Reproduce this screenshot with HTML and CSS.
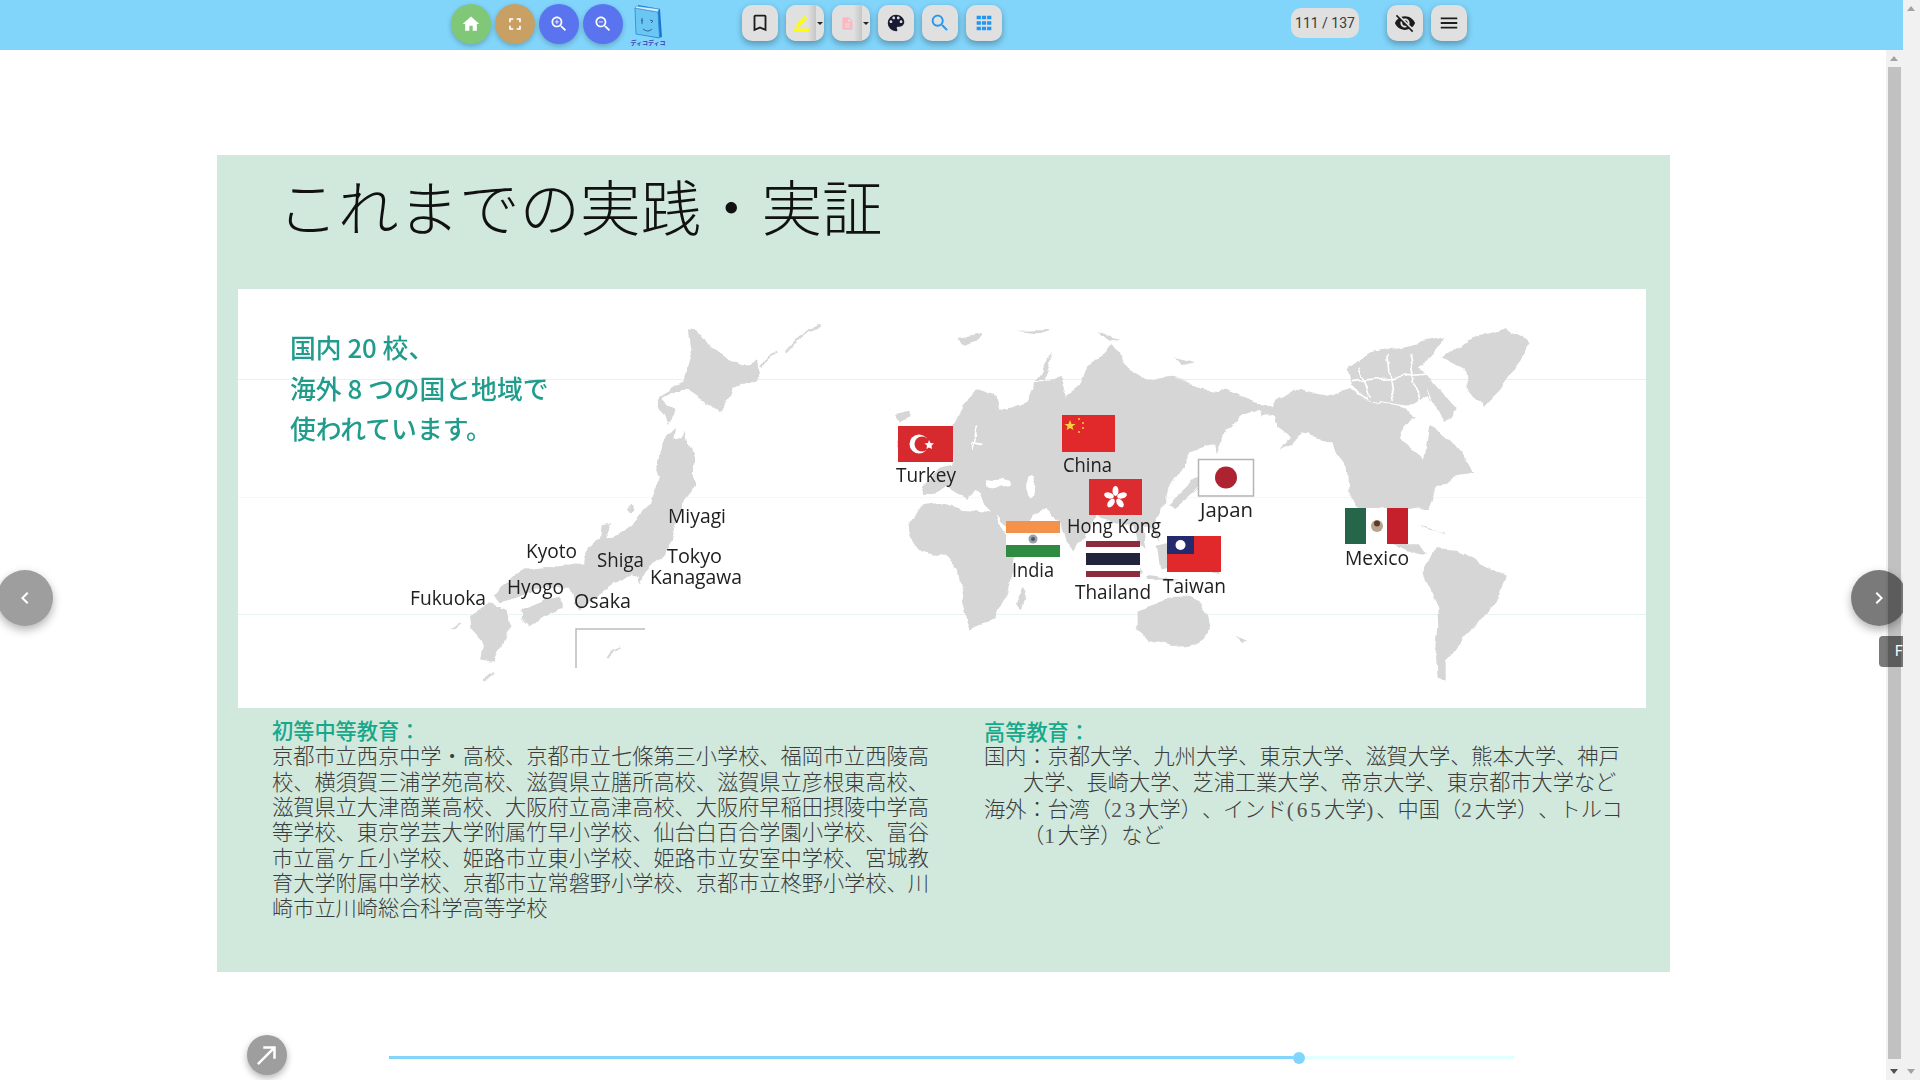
FILE: index.html
```html
<!DOCTYPE html>
<html lang="ja">
<head>
<meta charset="utf-8">
<title>ディコディコ</title>
<link rel="stylesheet" href="styles.css">
</head>
<body>
<div class="app">
  <header class="toolbar">
    <div class="group circles">
      <button class="circle home"><svg viewBox="0 0 24 24"><path d="M10 20v-6h4v6h5v-8h3L12 3 2 12h3v8z"/></svg></button>
      <button class="circle full"><svg viewBox="0 0 24 24"><path d="M7 14H5v5h5v-2H7v-3zm-2-4h2V7h3V5H5v5zm12 7h-3v2h5v-5h-2v3zM14 5v2h3v3h2V5h-5z"/></svg></button>
      <button class="circle zoom"><svg viewBox="0 0 24 24"><path d="M15.5 14h-.79l-.28-.27C15.41 12.59 16 11.11 16 9.5 16 5.91 13.09 3 9.5 3S3 5.91 3 9.5 5.91 16 9.5 16c1.61 0 3.09-.59 4.23-1.57l.27.28v.79l5 4.99L20.49 19l-4.99-5zm-6 0C7.01 14 5 11.99 5 9.5S7.01 5 9.5 5 14 7.01 14 9.5 11.99 14 9.5 14z"/><path d="M12 10h-2v2H9v-2H7V9h2V7h1v2h2v1z"/></svg></button>
      <button class="circle zoom"><svg viewBox="0 0 24 24"><path d="M15.5 14h-.79l-.28-.27C15.41 12.59 16 11.11 16 9.5 16 5.91 13.09 3 9.5 3S3 5.91 3 9.5 5.91 16 9.5 16c1.61 0 3.09-.59 4.23-1.57l.27.28v.79l5 4.99L20.49 19l-4.99-5zm-6 0C7.01 14 5 11.99 5 9.5S7.01 5 9.5 5 14 7.01 14 9.5 11.99 14 9.5 14z"/><path d="M7 9h5v1H7z"/></svg></button>
    </div>
    <div class="logo">
      <svg viewBox="0 0 30 35" class="logo-book">
        <path d="M5 1 27 5 29 33 25 34 3 29z" fill="#1976d2"/>
        <path d="M2 4 25 8 26.500 34 3 30z" fill="#6cc6f4" stroke="#2a86cf" stroke-width=".8"/>
        <path d="M3 2 26 5 25 8 2 4z" fill="#d2f0fc" stroke="#2a86cf" stroke-width=".5"/>
        <path d="M9 14v6M8 16l2 1M17 16l3 1 -2 2M10 25q5 4 9 0" fill="none" stroke="#245c8f" stroke-width=".9"/>
      </svg>
      <span class="logo-text">ディコディコ</span>
    </div>
    <div class="group tools">
      <button class="square"><svg viewBox="0 0 24 24" class="ic-dark"><path d="M17 3H7c-1.100 0-2 .9-2 2v16l7-3 7 3V5c0-1.100-.9-2-2-2zm0 15l-5-2.180L7 18V5h10v13z"/></svg></button>
      <div class="split">
        <div class="split-main"><svg viewBox="0 0 24 24" class="ic-yellow"><path d="M17.750 7 14 3.250l-10 10V17h3.750l10-10zm2.960-2.960c.39-.39.39-1.020 0-1.410L18.370.29a.9959.9959 0 0 0-1.410 0L15 2.250 18.750 6l1.960-1.960z"/><path d="M0 20h24v4H0z"/></svg></div>
        <div class="split-caret"><i class="caret"></i></div>
      </div>
      <div class="split">
        <div class="split-main"><svg viewBox="0 0 24 24" class="ic-pink"><path d="M14 2H6c-1.100 0-1.990.9-1.990 2L4 20c0 1.100.89 2 1.990 2H18c1.100 0 2-.9 2-2V8l-6-6zm2 16H8v-2h8v2zm0-4H8v-2h8v2zm-3-5V3.500L18.500 9H13z"/></svg></div>
        <div class="split-caret"><i class="caret"></i></div>
      </div>
      <button class="square"><svg viewBox="0 0 24 24" class="ic-navy"><path d="M12 3a9 9 0 0 0 0 18c.83 0 1.500-.67 1.500-1.500 0-.39-.15-.74-.39-1.010-.23-.26-.38-.61-.38-.99 0-.83.67-1.500 1.500-1.500H16c2.760 0 5-2.240 5-5 0-4.420-4.030-8-9-8zm-5.500 9c-.83 0-1.500-.67-1.500-1.500S5.670 9 6.500 9 8 9.670 8 10.500 7.330 12 6.500 12zm3-4C8.670 8 8 7.330 8 6.500S8.670 5 9.500 5s1.500.67 1.500 1.500S10.330 8 9.500 8zm5 0c-.83 0-1.500-.67-1.500-1.500S13.670 5 14.500 5s1.500.67 1.500 1.500S15.330 8 14.500 8zm3 4c-.83 0-1.500-.67-1.500-1.500S16.670 9 17.500 9s1.500.67 1.500 1.500-.67 1.500-1.500 1.500z"/></svg></button>
      <button class="square"><svg viewBox="0 0 24 24" class="ic-blue"><path d="M15.500 14h-.79l-.28-.27C15.410 12.590 16 11.110 16 9.500 16 5.910 13.090 3 9.500 3S3 5.910 3 9.500 5.910 16 9.500 16c1.610 0 3.090-.59 4.230-1.570l.27.28v.79l5 4.990L20.490 19l-4.990-5zm-6 0C7.010 14 5 11.990 5 9.500S7.010 5 9.500 5 14 7.010 14 9.500 11.990 14 9.500 14z"/></svg></button>
      <button class="square"><svg viewBox="0 0 24 24" class="ic-blue"><path d="M4 8h4.600V4H4v4zm5.700 0h4.600V4H9.700v4zm5.700-4v4H20V4h-4.600zM4 14h4.600v-4H4v4zm5.700 0h4.600v-4H9.700v4zm5.700 0H20v-4h-4.600v4zM4 20h4.600v-4H4v4zm5.700 0h4.600v-4H9.700v4zm5.700 0H20v-4h-4.600v4z"/></svg></button>
    </div>
    <div class="page-pill">111 / 137</div>
    <div class="group actions">
      <button class="square"><svg viewBox="0 0 24 24" class="ic-dark"><path d="M12 7c2.760 0 5 2.240 5 5 0 .65-.13 1.260-.36 1.830l2.920 2.920c1.510-1.260 2.700-2.890 3.430-4.750-1.730-4.390-6-7.500-11-7.500-1.400 0-2.740.25-3.980.7l2.160 2.160C10.740 7.130 11.350 7 12 7zM2 4.270l2.280 2.280.46.46C3.080 8.300 1.780 10.020 1 12c1.730 4.390 6 7.500 11 7.500 1.550 0 3.030-.3 4.380-.84l.42.42L19.730 22 21 20.730 3.270 3 2 4.270zM7.530 9.800l1.550 1.550c-.05.21-.08.43-.08.65 0 1.660 1.340 3 3 3 .22 0 .44-.03.65-.08l1.550 1.550c-.67.33-1.410.53-2.200.53-2.760 0-5-2.240-5-5 0-.79.2-1.530.53-2.200zm4.310-.78l3.150 3.150.02-.16c0-1.660-1.340-3-3-3l-.17.01z"/></svg></button>
      <button class="square"><svg viewBox="0 0 24 24" class="ic-dark"><path d="M3 18h18v-2H3v2zm0-5h18v-2H3v2zm0-7v2h18V6H3z"/></svg></button>
    </div>
  </header>

  <div class="body-row">
    <main class="viewer">
      <section class="slide">
        <h1 class="slide-title">これまでの実践・実証</h1>
        <div class="map-box">
          <svg class="map" viewBox="238 289 1408 419" xmlns="http://www.w3.org/2000/svg">
            <defs>
              <filter id="rough" filterUnits="userSpaceOnUse" x="238" y="289" width="1408" height="419" color-interpolation-filters="sRGB">
                <feTurbulence type="fractalNoise" baseFrequency=".05" numOctaves="3" seed="7" result="n"/>
                <feDisplacementMap in="SourceGraphic" in2="n" scale="9" xChannelSelector="R" yChannelSelector="G"/>
              </filter>
            </defs>
            <line class="grid-a" x1="238" y1="379.500" x2="1646" y2="379.500"/>
            <line class="grid-b" x1="238" y1="497.500" x2="1646" y2="497.500"/>
            <line class="grid-a" x1="238" y1="614.500" x2="1646" y2="614.500"/>
            <g filter="url(#rough)">
              <!-- Japan -->
              <g class="land" transform="translate(400 310) scale(.33333)">
                <polygon points="870,55 895,60 930,110 985,150 1045,172 1068,145 1075,210 1020,230 1000,240 960,310 905,270 860,240 810,240 785,265 825,305 800,345 780,300 770,270 810,225 855,210 860,170 875,120"/>
                <polygon points="800,375 825,350 820,385 845,385 850,355 858,395 885,450 885,530 855,570 835,625 815,690 785,745 760,760 730,790 720,830 710,800 690,790 640,825 590,860 540,900 520,880 510,830 430,830 360,858 300,880 278,862 290,850 340,800 380,775 440,768 500,770 555,760 570,715 600,685 605,640 630,635 612,682 660,670 710,630 750,580 780,500 768,462 785,410"/>
                <polygon points="365,900 440,870 482,860 482,888 440,915 385,952 362,930"/>
                <polygon points="210,915 270,880 322,900 335,940 302,1010 282,1058 240,1048 250,1000 215,960"/>
                <polygon points="680,600 695,580 700,605 688,612"/>
                <polyline class="thin" points="1160,122 1200,80 1265,45"/>
                <polyline class="thin" points="1080,175 1105,140 1135,125"/>
                <polyline class="thin" points="625,1050 640,1020 658,1008"/>
                <polyline class="thin" points="250,1112 282,1085"/>
                <polyline class="thin" points="155,960 180,940"/>
              </g>
              <!-- Eurasia, Africa, Australia -->
              <g class="land" transform="translate(880 310) scale(.33333)">
                <polygon points="130,555 120,530 175,480 220,470 220,350 250,280 300,235 350,260 365,300 400,290 440,275 465,215 520,210 545,200 560,260 600,230 620,170 700,110 745,170 800,210 880,200 960,230 1040,240 1120,270 1170,290 1200,300 1200,330 1140,300 1080,320 1030,370 1020,400 980,410 920,430 918,480 880,510 860,540 850,590 820,640 840,700 810,650 790,650 800,720 770,690 760,650 720,640 650,620 620,665 585,725 560,690 545,640 500,600 450,620 435,680 370,640 345,610 310,575 300,550 280,540 255,570 230,545 200,530 170,550"/>
                <polygon points="85,650 120,590 190,580 250,600 330,605 345,600 352,632 392,690 442,690 402,760 382,850 342,920 270,962 250,880 235,790 190,735 110,720"/>
                <polygon points="410,880 430,838 440,845 425,900"/>
                <polygon points="45,315 90,305 95,325 60,338"/>
                <polygon points="230,85 310,68 290,95 255,105"/>
                <polygon points="655,65 720,90 690,95"/>
                <polygon points="885,145 950,160 905,168"/>
                <polygon points="410,62 515,60 480,72"/>
                <polygon points="470,210 525,120 505,175 490,210"/>
                <polygon points="770,905 830,885 860,860 930,860 970,880 985,950 960,1000 880,1005 800,985 770,950"/>
                <polygon points="730,720 790,780 770,785 725,735"/>
                <polygon points="795,795 900,808 800,810"/>
                <polygon points="830,710 870,700 880,760 840,770"/>
                <polygon points="900,730 1000,750 1020,790 940,770"/>
                <polygon points="1070,975 1105,990 1085,1000"/>
                <polygon points="860,585 920,530 985,470 1000,480 950,540 880,600"/>
                <polygon points="1005,400 1020,360 1025,395 1010,430"/>
                <polygon points="50,395 70,370 75,420 55,425"/>
                <g class="water">
                  <ellipse cx="352" cy="520" rx="35" ry="11"/>
                  <ellipse cx="455" cy="530" rx="8" ry="26"/>
                  <polyline points="275,420 290,350"/>
                  <polyline points="270,395 310,400"/>
                </g>
              </g>
              <!-- Americas -->
              <g class="land" transform="translate(1260 310) scale(.33333)">
                <polygon points="45,270 100,235 200,260 265,240 320,270 420,290 470,320 430,350 420,385 490,450 505,350 570,390 610,440 640,490 580,500 530,540 505,600 490,600 470,590 420,600 360,595 345,650 370,680 440,700 470,700 505,730 470,725 400,700 340,690 290,590 265,540 260,470 210,400 130,370 60,420 90,380 50,350 40,320"/>
                <polygon points="260,180 330,130 420,110 560,80 530,110 480,170 530,230 590,300 560,340 500,260 440,290 330,270 270,230"/>
                <polygon points="545,145 620,90 740,55 815,95 770,170 720,240 670,290 630,240 610,180"/>
                <polygon points="490,790 530,715 600,720 660,760 740,800 710,880 640,950 600,1000 560,1060 560,1115 530,1100 525,1040 535,950 530,870"/>
                <polygon points="480,650 560,672 500,660"/>
                <polygon points="0,295 20,305 5,322"/>
                <g class="water">
                  <polyline points="300,170 330,262"/>
                  <polyline points="380,135 400,275"/>
                  <polyline points="450,135 480,285"/>
                  <polyline points="270,215 520,190"/>
                  <polyline points="500,240 525,300"/>
                </g>
              </g>
            </g>
            <polyline class="inset" points="576,668 576,629 645,629"/>
            <!-- Flags -->
            <g>
              <rect x="898" y="426" width="55" height="36" fill="#d62a2e"/>
              <circle cx="919" cy="444" r="9.500" fill="#fff"/><circle cx="922" cy="444" r="7.500" fill="#d62a2e"/>
              <polygon points="929,440 930.500,443 934,443.500 931.500,445.500 932,449 929,447.500 926.500,449 927,445.500 924.500,443.500 928,443" fill="#fff"/>

              <rect x="1062" y="415" width="53" height="37" fill="#e1292b"/>
              <polygon points="1070,420 1071.500,424 1075.500,424 1072.300,426.500 1073.500,430 1070,428 1066.500,430 1067.700,426.500 1064.500,424 1068.500,424" fill="#f7d33b"/>
              <circle cx="1079" cy="419" r="1" fill="#f7d33b"/><circle cx="1083" cy="423" r="1" fill="#f7d33b"/><circle cx="1083" cy="428" r="1" fill="#f7d33b"/><circle cx="1079" cy="432" r="1" fill="#f7d33b"/>

              <rect x="1089" y="479" width="53" height="36" fill="#dd2c30"/>
              <g fill="#fff">
                <ellipse cx="1115.500" cy="491" rx="3" ry="5"/>
                <ellipse cx="1122" cy="495.500" rx="3" ry="5" transform="rotate(72 1122 495.500)"/>
                <ellipse cx="1120" cy="503" rx="3" ry="5" transform="rotate(144 1120 503)"/>
                <ellipse cx="1111" cy="503" rx="3" ry="5" transform="rotate(216 1111 503)"/>
                <ellipse cx="1109" cy="495.500" rx="3" ry="5" transform="rotate(288 1109 495.500)"/>
              </g>

              <rect x="1198.500" y="459.500" width="55" height="36.500" fill="#fff" stroke="#b5b5b5" stroke-width="1.500"/>
              <circle cx="1226" cy="477.500" r="11" fill="#ad2330"/>

              <rect x="1006" y="521" width="54" height="12" fill="#f4914a"/>
              <rect x="1006" y="533" width="54" height="12" fill="#fff"/>
              <rect x="1006" y="545" width="54" height="12" fill="#2f8b42"/>
              <circle cx="1033" cy="539" r="4.500" fill="#9ba0a8"/><circle cx="1033" cy="539" r="2" fill="#4a5568"/>

              <rect x="1086" y="541" width="54" height="36" fill="#fff"/>
              <rect x="1086" y="541" width="54" height="6" fill="#8c2c3c"/>
              <rect x="1086" y="553" width="54" height="12" fill="#22233c"/>
              <rect x="1086" y="571" width="54" height="6" fill="#8c2c3c"/>

              <rect x="1167" y="536" width="54" height="36" fill="#e1292b"/>
              <rect x="1167" y="536" width="27" height="18" fill="#242a6c"/>
              <circle cx="1180.500" cy="545" r="5" fill="#fff"/>

              <rect x="1345" y="508" width="21" height="36" fill="#25664a"/>
              <rect x="1366" y="508" width="21" height="36" fill="#fff"/>
              <rect x="1387" y="508" width="21" height="36" fill="#c5202c"/>
              <circle cx="1377" cy="526" r="6" fill="#b7a48e"/><circle cx="1377" cy="523.500" r="3" fill="#5a3a2c"/>
            </g>
            <!-- Labels -->
            <g class="place">
              <text x="668" y="523" textLength="58" lengthAdjust="spacingAndGlyphs">Miyagi</text>
              <text x="526" y="558" textLength="51" lengthAdjust="spacingAndGlyphs">Kyoto</text>
              <text x="597" y="567" textLength="47" lengthAdjust="spacingAndGlyphs">Shiga</text>
              <text x="667" y="563" textLength="55" lengthAdjust="spacingAndGlyphs">Tokyo</text>
              <text x="650" y="584" textLength="92" lengthAdjust="spacingAndGlyphs">Kanagawa</text>
              <text x="507" y="594" textLength="57" lengthAdjust="spacingAndGlyphs">Hyogo</text>
              <text x="410" y="605" textLength="76" lengthAdjust="spacingAndGlyphs">Fukuoka</text>
              <text x="574" y="608" textLength="57" lengthAdjust="spacingAndGlyphs">Osaka</text>
              <text x="896" y="482" textLength="60" lengthAdjust="spacingAndGlyphs">Turkey</text>
              <text x="1063" y="472" textLength="49" lengthAdjust="spacingAndGlyphs">China</text>
              <text x="1200" y="517" textLength="53" lengthAdjust="spacingAndGlyphs">Japan</text>
              <text x="1067" y="533" textLength="94" lengthAdjust="spacingAndGlyphs">Hong Kong</text>
              <text x="1012" y="577" textLength="42" lengthAdjust="spacingAndGlyphs">India</text>
              <text x="1075" y="599" textLength="76" lengthAdjust="spacingAndGlyphs">Thailand</text>
              <text x="1163" y="593" textLength="63" lengthAdjust="spacingAndGlyphs">Taiwan</text>
              <text x="1345" y="565" textLength="64" lengthAdjust="spacingAndGlyphs">Mexico</text>
            </g>
            <g class="lead">
              <text x="290" y="358">国内 20 校、</text>
              <text x="290" y="399">海外 8 つの国と地域で</text>
              <text x="290" y="439">使われています。</text>
            </g>
          </svg>
        </div>
        <div class="columns">
          <div class="col col-left">
            <h2 class="col-head">初等中等教育：</h2>
            <p class="col-text">京都市立西京中学・高校、京都市立七條第三小学校、福岡市立西陵高<br>校、横須賀三浦学苑高校、滋賀県立膳所高校、滋賀県立彦根東高校、<br>滋賀県立大津商業高校、大阪府立高津高校、大阪府早稲田摂陵中学高<br>等学校、東京学芸大学附属竹早小学校、仙台白百合学園小学校、富谷<br>市立富ヶ丘小学校、姫路市立東小学校、姫路市立安室中学校、宮城教<br>育大学附属中学校、京都市立常磐野小学校、京都市立柊野小学校、川<br>崎市立川崎総合科学高等学校</p>
          </div>
          <div class="col col-right">
            <h2 class="col-head">高等教育：</h2>
            <p class="col-text hang">国内：京都大学、九州大学、東京大学、滋賀大学、熊本大学、神戸<br>大学、長崎大学、芝浦工業大学、帝京大学、東京都市大学など</p>
            <p class="col-text hang second">海外：台湾（<span class="wide">23</span>大学）、インド<span class="wide">(65</span>大学<span class="wide">)</span>、中国（<span class="wide">2</span>大学）、トルコ<br>（<span class="wide">1</span>大学）など</p>
          </div>
        </div>
      </section>
      <footer class="foot">
        <button class="fab"><svg viewBox="0 0 24 24"><path d="M9 5v2h6.590L4 18.590 5.410 20 17 8.410V15h2V5z"/></svg></button>
        <div class="slider"><div class="slider-fill"></div><div class="slider-thumb"></div><div class="slider-rest"></div></div>
      </footer>
      <button class="nav nav-prev"><svg viewBox="0 0 24 24"><path d="M15.410 7.410 14 6l-6 6 6 6 1.410-1.410L10.830 12z"/></svg></button>
      <button class="nav nav-next"><svg viewBox="0 0 24 24"><path d="M10 6 8.590 7.410 13.170 12l-4.580 4.590L10 18l6-6z"/></svg></button>
      <div class="side-tab">F</div>
    </main>
    <div class="scrollbar inner">
      <i class="arrow up"></i>
      <div class="thumb"></div>
      <i class="arrow down dark"></i>
    </div>
  </div>
</div>
<div class="scrollbar outer">
  <i class="arrow up"></i>
  <i class="arrow down"></i>
</div>
</body>
</html>
```
FILE: styles.css
```css
* { box-sizing: border-box; }
html, body { margin: 0; height: 100%; overflow: hidden; }
body { display: flex; width: 1920px; height: 1080px; background: #fff; font-family: Roboto, "Noto Sans CJK JP", sans-serif; }
button { border: 0; padding: 0; margin: 0; }
svg { display: block; }

.app { width: 1903px; height: 1080px; display: flex; flex-direction: column; overflow: hidden; }

/* toolbar */
.toolbar { position: relative; z-index: 2; flex: 0 0 50px; height: 50px; background: #81d4fa; display: flex; align-items: flex-start; padding-left: 451px; }
.group { display: flex; }
.circles { gap: 4px; padding-top: 4px; }
.circle { width: 40px; height: 40px; border-radius: 50%; display: flex; align-items: center; justify-content: center; box-shadow: 0 2px 5px rgba(0,0,0,.22); }
.circle svg { width: 20px; height: 20px; fill: #fff; }
.home { background: #80c878; }
.full { background: #c9a063; }
.zoom { background: #5a74f0; }

.logo { margin-left: 9px; width: 32px; padding-top: 4px; display: flex; flex-direction: column; align-items: center; }
.logo-book { width: 30px; height: 35px; }
.logo-text { font-family: "Noto Sans CJK JP", sans-serif; font-size: 6px; line-height: 7px; font-weight: 700; color: #3d3db5; white-space: nowrap; }

.tools { gap: 8px; margin-left: 78px; padding-top: 5px; }
.square { width: 36px; height: 36px; border-radius: 10px; background: #e0e0e0; display: flex; align-items: center; justify-content: center; box-shadow: 0 3px 6px rgba(0,0,0,.3); }
.square svg { width: 22px; height: 22px; }
.ic-dark { fill: #1c1c1c; }
.ic-navy { fill: #1a1a33; }
.ic-blue { fill: #2196f3; }
.ic-yellow { fill: #ffff00; }
.ic-pink { fill: #ffb6c1; }
.split { width: 38px; height: 36px; border-radius: 10px; background: #e0e0e0; display: flex; overflow: hidden; box-shadow: 0 3px 6px rgba(0,0,0,.3); }
.split-main { width: 30px; display: flex; align-items: center; justify-content: center; background: linear-gradient(90deg, #e0e0e0 72%, #c6c6c6); }
.split-main svg { width: 15px; height: 15px; }
.split-caret { flex: 1; display: flex; align-items: center; justify-content: center; }
.caret { width: 0; height: 0; border-left: 3px solid transparent; border-right: 3px solid transparent; border-top: 3px solid #222; }

.page-pill { margin: 8px 0 0 289px; width: 68px; height: 30px; border-radius: 10px; background: #e0e0e0; color: #3a3a3a; font-size: 14px; line-height: 30px; text-align: center; }
.actions { gap: 8px; margin-left: 28px; padding-top: 5px; }

/* viewer */
.body-row { flex: 1; display: flex; min-height: 0; }
.viewer { position: relative; flex: 1; padding: 105px 0 0 216.500px; }
.slide { width: 1453.500px; height: 817px; background: #d1e8dc; display: flex; flex-direction: column; }
.slide-title { margin: 0; height: 134px; padding-left: 61px; font-family: "Noto Sans CJK JP", serif; font-size: 60.500px; line-height: 100px; font-weight: 300; color: #111; white-space: nowrap; }
.map-box { margin-left: 21.500px; width: 1408px; height: 419px; background: #fff; }
.map { width: 1408px; height: 419px; filter: blur(.4px); }
.grid-a { stroke: #e6f3ef; stroke-width: 1; }
.grid-b { stroke: #f3f9f7; stroke-width: 1; }
.land { fill: #d6d6d6; }
.thin { fill: none; stroke: #d6d6d6; stroke-width: 6; }
.inset { fill: none; stroke: #bdbdbd; stroke-width: 1.500; }
.water { fill: #fff; stroke: #fff; stroke-width: 5; }
.water polyline { fill: none; }
.place text { font-family: "Open Sans", "Noto Sans", sans-serif; font-size: 19.500px; font-weight: 500; fill: #202020; }
.lead text { font-family: "Noto Sans CJK JP", sans-serif; font-size: 25.800px; font-weight: 500; fill: #219c8c; }

.columns { display: flex; padding: 9px 0 0 55.500px; }
.col { font-family: "Liberation Serif", "Noto Sans CJK JP", serif; font-size: 21.200px; line-height: 25.350px; color: #3c3c3c; white-space: nowrap; text-spacing-trim: space-all; }
.col-left { width: 712px; }
.col-head { margin: 0 0 3px; font: inherit; font-family: "Noto Sans CJK JP", sans-serif; font-weight: 500; color: #17a88b; }
.col-right .col-head { padding-top: 1px; margin-bottom: 2px; }
.col-text { margin: 0; font-weight: 300; }
.hang { padding-left: 39px; text-indent: -39px; }
.second { margin-top: .5px; line-height: 26.500px; }
.wide { letter-spacing: 3px; color: #555; }

/* footer */
.foot { display: flex; align-items: center; margin: 63px 0 0 30.500px; }
.fab { width: 40px; height: 40px; border-radius: 50%; background: #9e9e9e; display: flex; align-items: center; justify-content: center; box-shadow: 0 3px 7px rgba(0,0,0,.3); }
.fab svg { width: 30px; height: 30px; fill: #fff; }
.slider { display: flex; align-items: center; margin-left: 102px; margin-top: 5px; width: 1125px; }
.slider-fill { width: 904px; height: 3px; background: #81d4fa; }
.slider-thumb { width: 12px; height: 12px; border-radius: 50%; background: #81d4fa; }
.slider-rest { flex: 1; height: 3px; background: #e0ffff; }

/* floating controls */
.nav { position: absolute; top: 520px; width: 56px; height: 56px; border-radius: 50%; display: flex; align-items: center; justify-content: center; box-shadow: 0 4px 10px rgba(0,0,0,.3); }
.nav svg { width: 24px; height: 24px; fill: #fff; }
.nav-prev { left: -3px; background: #9e9e9e; }
.nav-next { right: -4px; background: rgba(0,0,0,.52); z-index: 3; }
.side-tab { position: absolute; top: 586px; right: 0; width: 24px; height: 31px; border-radius: 4px 0 0 4px; background: rgba(0,0,0,.52); color: #fff; font-size: 14px; line-height: 31px; padding-left: 16px; z-index: 3; overflow: hidden; }

/* scrollbars */
.scrollbar { position: relative; width: 17px; background: #f1f1f1; flex: none; }
.inner { height: 1030px; margin-left: -17px; }
.outer { height: 1080px; }
.thumb { position: absolute; left: 2px; top: 17px; width: 13px; height: 992px; background: #c1c1c1; }
.arrow { position: absolute; left: 4px; width: 0; height: 0; border-left: 4.500px solid transparent; border-right: 4.500px solid transparent; }
.up { top: 6px; border-bottom: 5px solid #a3a3a3; }
.down { bottom: 6px; border-top: 5px solid #a3a3a3; }
.dark { border-top-color: #505050; }
```
